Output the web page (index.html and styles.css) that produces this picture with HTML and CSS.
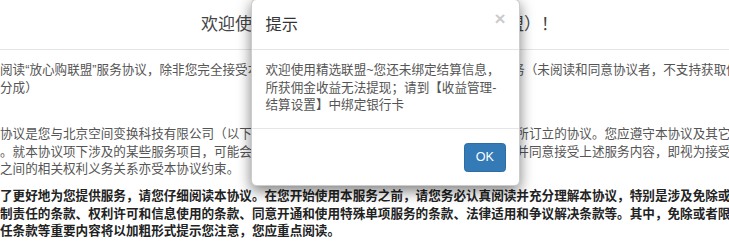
FILE: index.html
```html
<!DOCTYPE html>
<html lang="zh-CN">
<head>
<meta charset="utf-8">
<title>精选联盟</title>
<link rel="stylesheet" href="styles.css">
</head>
<body>
<div class="page">
  <header class="page-header">
    <h1 class="page-title">欢迎使用放心购联盟（原名为精选商品联盟）！</h1>
  </header>
  <div class="terms">
    <p class="para p1">阅读“放心购联盟”服务协议，除非您完全接受本协议的全部条款，否则请您不要使用本联盟服务（未阅读和同意协议者，不支持获取佣金<br>分成）</p>
    <p class="para p2">协议是您与北京空间变换科技有限公司（以下简称空间变换公司）与您之间就放心购联盟服务所订立的协议。您应遵守本协议及其它相关规则<br>。就本协议项下涉及的某些服务项目，可能会有单独的服务协议或规则，您在使用前应当阅读并同意接受上述服务内容，即视为接受本协议<br>之间的相关权利义务关系亦受本协议约束。</p>
    <p class="para p3">了更好地为您提供服务，请您仔细阅读本协议。在您开始使用本服务之前，请您务必认真阅读并充分理解本协议，特别是涉及免除或者限<br>制责任的条款、权利许可和信息使用的条款、同意开通和使用特殊单项服务的条款、法律适用和争议解决条款等。其中，免除或者限制<br>任条款等重要内容将以加粗形式提示您注意，您应重点阅读。</p>
  </div>
</div>

<div class="modal" role="dialog">
  <div class="modal-header">
    <h4 class="modal-title">提示</h4>
    <span class="close">×</span>
  </div>
  <div class="modal-body">欢迎使用精选联盟~您还未绑定结算信息，<br>所获佣金收益无法提现；请到【收益管理-<br>结算设置】中绑定银行卡</div>
  <div class="modal-footer">
    <button class="btn-ok" type="button">OK</button>
  </div>
</div>
</body>
</html>
```
FILE: styles.css
```css
html, body {
  margin: 0;
  padding: 0;
  background: #fff;
}

body {
  overflow: hidden;
  font-family: "Liberation Sans", "Noto Sans CJK SC", sans-serif;
}

.page {
  width: 759px;
}

.page-header {
  height: 49px;
  border-bottom: 1px solid #e5e5e5;
  display: flex;
  align-items: center;
  justify-content: center;
}

.page-title {
  margin: 0;
  font-size: 17px;
  font-weight: normal;
  line-height: 1;
  color: #444;
}

.terms {
  font-size: 12.6px;
  line-height: 17.6px;
  color: #555;
}

.para {
  margin: 0;
  white-space: nowrap;
}

.p1 {
  margin-top: 12px;
}

.p2 {
  margin-top: 29px;
}

.p3 {
  margin-top: 9px;
  font-weight: bold;
  color: #222;
}

.modal {
  position: absolute;
  top: -1px;
  left: 251px;
  width: 269px;
  box-sizing: border-box;
  background: #fff;
  border: 1px solid rgba(0, 0, 0, 0.2);
  border-radius: 5.4px;
  box-shadow: 0 4.5px 13.5px rgba(0, 0, 0, 0.5);
}

.modal-header {
  display: flex;
  justify-content: space-between;
  align-items: flex-start;
  padding: 12.5px 13.5px 13.5px;
  border-bottom: 1px solid #e5e5e5;
}

.modal-title {
  margin: 0;
  font-size: 16.2px;
  font-weight: normal;
  line-height: 23px;
  color: #333;
}

.close {
  margin-top: -4px;
  font-size: 19px;
  font-weight: bold;
  line-height: 1;
  color: #000;
  opacity: 0.2;
}

.modal-body {
  padding: 12px 13.5px 13px;
  font-size: 12.6px;
  line-height: 17.6px;
  color: #555;
}

.modal-footer {
  padding: 14px 13px 13px;
  border-top: 1px solid #e5e5e5;
  display: flex;
  justify-content: flex-end;
}

.btn-ok {
  margin: 0;
  padding: 5px 11px;
  font-family: "Liberation Sans", sans-serif;
  font-size: 12.6px;
  line-height: 17px;
  color: #fff;
  background: #337ab7;
  border: 1px solid #2e6da4;
  border-radius: 3.6px;
}
```
